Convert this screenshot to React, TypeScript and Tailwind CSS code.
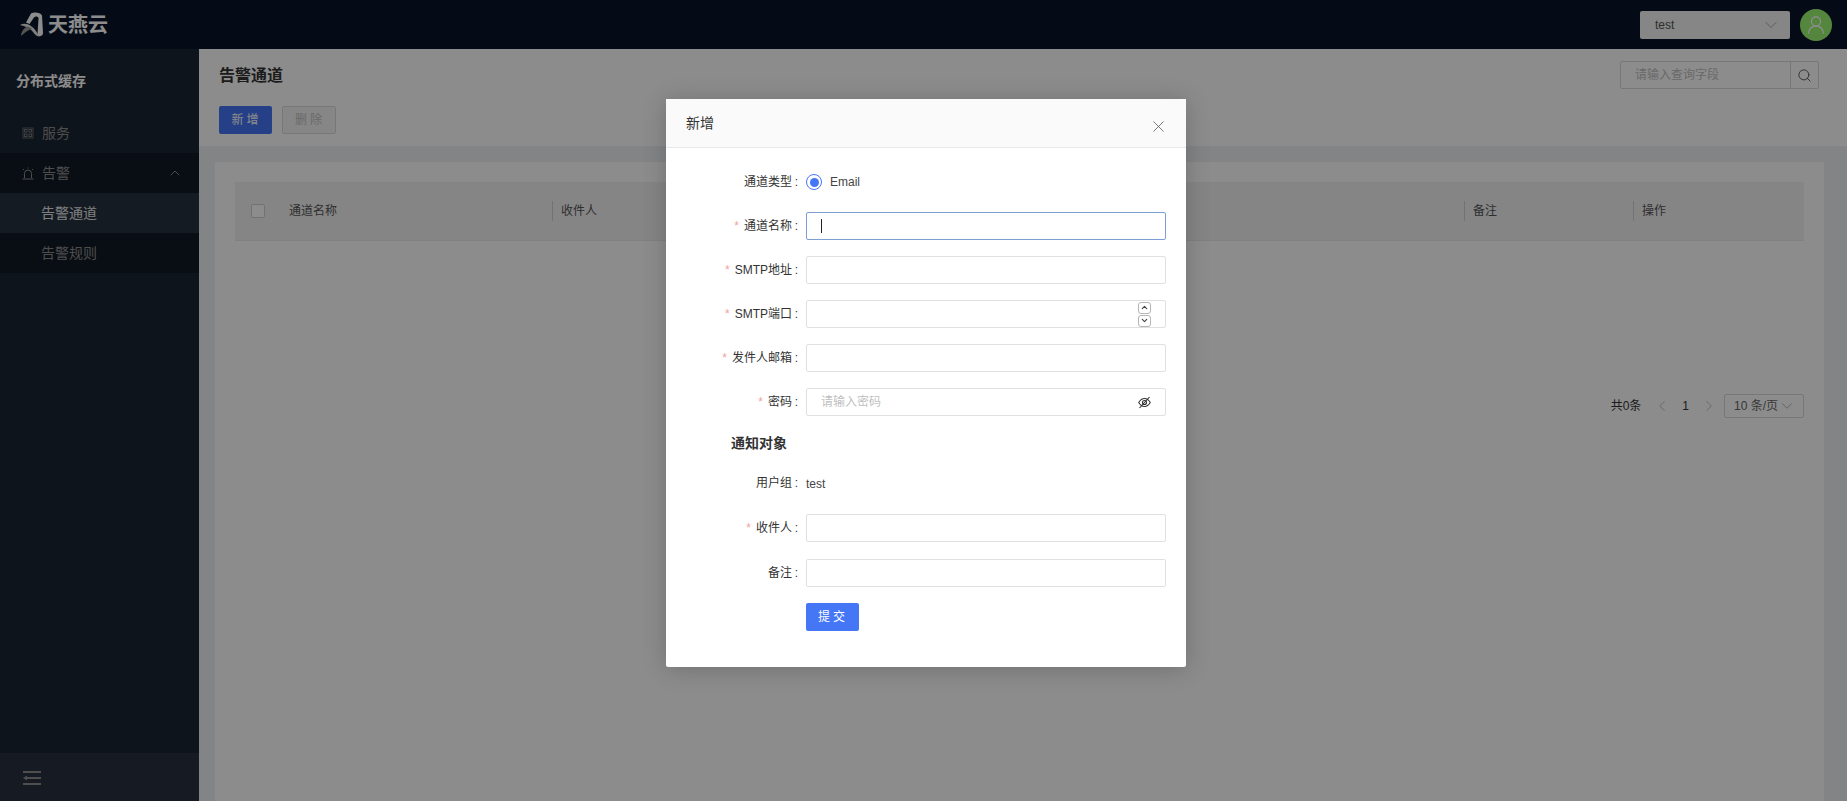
import { ChevronDown, ChevronLeft, ChevronRight, ChevronUp, Search, UserRound, X } from "lucide-react";
import type { ReactNode } from "react";

function Logo() {
  return (
    <svg width="24" height="25" viewBox="0 0 24 25" className="shrink-0">
      <path d="M11 1.500 C14 0 20 0 22 3.500 L23 21 C23 24.500 19 25 17.500 22.500 L18.500 6 C18 4 15 4 14 5.500 L9.500 12 L6 10.500 Z" fill="#ffffff" />
      <path d="M0 13 C5 10 12 12 18 22 C19 24 20 24.500 21 24.500 C17 25 15 23 13 20 C10 16 5 14 0 13 Z" fill="#e5e5e5" />
      <path d="M1 24 C1.500 19 4 16 7.500 14.500 C9.500 15 11 16 12 17 C8 17.500 5 21 1 24 Z" fill="#9a9a9a" />
    </svg>
  );
}

function ServiceIcon() {
  return (
    <svg width="12" height="12" viewBox="0 0 12 12" fill="none" stroke="currentColor" className="shrink-0 opacity-80">
      <rect x="1" y="1" width="10" height="10" strokeWidth="0.800" />
      <rect x="2.500" y="2.500" width="2.500" height="2.500" />
      <rect x="7" y="2.500" width="2.500" height="2.500" />
      <rect x="2.500" y="7" width="2.500" height="2.500" />
      <rect x="7" y="7" width="2.500" height="2.500" />
    </svg>
  );
}

function AlarmIcon() {
  return (
    <svg width="12" height="13" viewBox="0 0 12 13" fill="none" stroke="currentColor" className="shrink-0">
      <path d="M2.500 11 V6.500 a3.500 3.500 0 0 1 7 0 V11" />
      <path d="M0.500 12 H11.500" />
      <path d="M6 0.500 V1.500 M1 2 L2 3 M11 2 L10 3" />
    </svg>
  );
}

function CollapseIcon() {
  return (
    <svg width="19" height="14" viewBox="0 0 19 14" fill="#8f8f8f" className="shrink-0">
      <rect x="0" y="0" width="18" height="2" />
      <rect x="4" y="6" width="14" height="2" />
      <rect x="0" y="12" width="18" height="2" />
      <path d="M0 7 L4 4.500 V9.500 Z" />
    </svg>
  );
}

function EyeInvisible() {
  return (
    <svg width="13" height="13" viewBox="0 0 13 13" fill="none" stroke="#333333" strokeWidth="1.100">
      <path d="M0.700 6.500 C2.500 3.500 4.500 2.500 6.500 2.500 C8.500 2.500 10.500 3.500 12.300 6.500 C10.500 9.500 8.500 10.500 6.500 10.500 C4.500 10.500 2.500 9.500 0.700 6.500 Z" />
      <circle cx="6.500" cy="6.500" r="2" />
      <path d="M11.500 1 L1.500 12" />
    </svg>
  );
}

function Spinner() {
  return (
    <div className="flex flex-col gap-[1px]">
      <span className="flex h-[12px] w-[13px] items-center justify-center rounded-[3px] border border-[#b5b5b5]">
        <ChevronUp className="h-[9px] w-[9px] text-[#444444]" strokeWidth={3} />
      </span>
      <span className="flex h-[12px] w-[13px] items-center justify-center rounded-[3px] border border-[#b5b5b5]">
        <ChevronDown className="h-[9px] w-[9px] text-[#444444]" strokeWidth={3} />
      </span>
    </div>
  );
}

function Field({ label, required, className, children }: { label: string; required?: boolean; className?: string; children: ReactNode }) {
  return (
    <div className={`flex h-[28px] items-center ${className ?? ""}`}>
      <div className="flex w-[133px] shrink-0 items-center justify-end text-xs text-[#333333]">
        {required && <span className="mr-[5px] text-[#f2a3a3]">*</span>}
        <span>{label}</span>
        <span className="ml-[2px] w-[5px] text-center">:</span>
      </div>
      <div className="ml-[7px] w-[360px]">{children}</div>
    </div>
  );
}

function Box({ focused, children }: { focused?: boolean; children?: ReactNode }) {
  return (
    <div
      className={`flex h-[28px] items-center justify-between rounded-[2px] border bg-white pl-[14px] pr-[14px] text-xs ${
        focused ? "border-[#7d9fd3]" : "border-[#e0e0e0]"
      }`}
    >
      {children}
    </div>
  );
}

function HeadCell({ label, className }: { label: string; className: string }) {
  return (
    <div className={`flex h-[20px] items-center border-l border-[#d0d0d0] pl-[8px] ${className}`}>{label}</div>
  );
}

export default function App() {
  return (
    <div className="relative flex h-[801px] w-full flex-col overflow-hidden bg-[#eef0f3] font-['Liberation_Sans','Noto_Sans_CJK_SC',sans-serif]">
      <header className="flex h-[49px] shrink-0 items-center justify-between bg-[#0a1529] pl-[20px] pr-[15px]">
        <div className="flex items-center gap-[4px]">
          <Logo />
          <span className="text-[20px] font-bold leading-none text-white">天燕云</span>
        </div>
        <div className="flex items-center gap-[10px]">
          <div className="flex h-[28px] w-[150px] items-center justify-between rounded-[2px] bg-[#f4f4f4] pl-[15px] pr-[9px] text-xs text-[#555555]">
            test
            <ChevronDown className="h-[20px] w-[20px] text-[#999999]" strokeWidth={1} />
          </div>
          <div className="flex h-[32px] w-[32px] items-center justify-center rounded-full bg-[#9cf56f]">
            <UserRound className="h-[22px] w-[22px] text-white" strokeWidth={1.4} />
          </div>
        </div>
      </header>

      <div className="flex min-h-0 flex-1">
        <aside className="flex w-[199px] shrink-0 flex-col bg-[#1b2532] text-[#8c8c8c]">
          <div className="flex h-[64px] items-center pl-[16px] text-sm font-bold text-white">分布式缓存</div>
          <div className="flex h-[40px] items-center gap-[8px] pl-[22px] text-sm">
            <ServiceIcon />
            服务
          </div>
          <div className="bg-[#121a26]">
            <div className="flex h-[40px] items-center gap-[8px] pl-[22px] pr-[16px] text-sm">
              <AlarmIcon />
              <span className="flex-1">告警</span>
              <ChevronUp className="h-[16px] w-[16px]" strokeWidth={1.5} />
            </div>
            <div className="flex h-[40px] items-center bg-[#263240] pl-[41px] text-sm text-[#e8e8e8]">告警通道</div>
            <div className="flex h-[40px] items-center pl-[41px] text-sm">告警规则</div>
          </div>
          <div className="mt-auto flex h-[48px] items-center bg-[#283140] pl-[23px] pt-[2px]">
            <CollapseIcon />
          </div>
        </aside>

        <main className="flex min-w-0 flex-1 flex-col">
          <div className="bg-white pb-[12px] pl-[20px] pr-[28px] pt-[12px]">
            <div className="flex h-[28px] items-center justify-between">
              <h1 className="pt-[1px] text-base font-bold text-[#333333]">告警通道</h1>
              <div className="flex h-[28px] w-[199px] items-stretch rounded-[2px] border border-[#d9d9d9] text-xs text-[#bfbfbf]">
                <span className="flex flex-1 items-center border-r border-[#d9d9d9] pl-[14px]">请输入查询字段</span>
                <span className="flex w-[27px] items-center justify-center">
                  <Search className="h-[15px] w-[15px] text-[#555555]" strokeWidth={1.5} />
                </span>
              </div>
            </div>
            <div className="mt-[17px] flex gap-[10px] text-xs">
              <button className="h-[28px] w-[53px] rounded-[2px] bg-[#4576f6] pl-[2px] tracking-[3px] text-white">新增</button>
              <button className="h-[28px] w-[54px] rounded-[2px] border border-[#d9d9d9] bg-[#f5f5f5] pl-[2px] tracking-[3px] text-[#bfbfbf]">删除</button>
            </div>
          </div>

          <div className="min-h-0 flex-1 pb-0 pl-[16px] pr-[23px] pt-[16px]">
            <div className="h-full bg-white px-[20px] pt-[20px]">
              <div className="flex h-[59px] items-center border-b border-[#ebebeb] bg-[#f2f2f2] text-xs text-[#555555]">
                <div className="w-[48px] shrink-0 pl-[16px]">
                  <span className="block h-[14px] w-[14px] rounded-[2px] border border-[#d0d0d0] bg-white" />
                </div>
                <div className="w-[269px] shrink-0 pl-[6px]">通道名称</div>
                <HeadCell label="收件人" className="flex-1" />
                <HeadCell label="备注" className="w-[169px] shrink-0" />
                <HeadCell label="操作" className="w-[171px] shrink-0" />
              </div>
              <div className="mt-[153px] flex h-[24px] items-center justify-end text-xs text-[#333333]">
                <span>共0条</span>
                <ChevronLeft className="ml-[12px] h-[18px] w-[18px] text-[#aaaaaa]" strokeWidth={1} />
                <span className="mx-[11px]">1</span>
                <ChevronRight className="mr-[6px] h-[18px] w-[18px] text-[#aaaaaa]" strokeWidth={1} />
                <div className="flex h-[24px] w-[80px] items-center rounded-[2px] border border-[#d9d9d9] pl-[9px] text-[#666666]">
                  10 条/页
                  <ChevronDown className="h-[18px] w-[18px] text-[#999999]" strokeWidth={1} />
                </div>
              </div>
            </div>
          </div>
        </main>
      </div>

      <div className="absolute inset-0 bg-black/45" />

      <div className="absolute left-[666px] top-[99px] h-[568px] w-[520px] rounded-[2px] bg-white shadow-[0_2px_24px_rgba(0,0,0,0.2)]">
        <div className="flex h-[49px] items-center justify-between border-b border-[#e8e8e8] bg-[#fafafa] pl-[20px] pr-[18px]">
          <span className="text-sm text-[#333333]">新增</span>
          <X className="mt-[7px] h-[19px] w-[19px] text-[#555555]" strokeWidth={1} />
        </div>

        <div className="pt-[20px]">
          <Field label="通道类型" className="mb-[16px]">
            <div className="flex items-center gap-[8px] text-xs text-[#444444]">
              <span className="flex h-[16px] w-[16px] items-center justify-center rounded-full border border-[#4576f6]">
                <span className="block h-[9px] w-[9px] rounded-full bg-[#4576f6]" />
              </span>
              Email
            </div>
          </Field>
          <Field label="通道名称" required className="mb-[16px]">
            <Box focused>
              <span className="h-[14px] w-px bg-[#222222]" />
            </Box>
          </Field>
          <Field label="SMTP地址" required className="mb-[16px]">
            <Box />
          </Field>
          <Field label="SMTP端口" required className="mb-[16px]">
            <Box>
              <span />
              <Spinner />
            </Box>
          </Field>
          <Field label="发件人邮箱" required className="mb-[16px]">
            <Box />
          </Field>
          <Field label="密码" required className="mb-[16px]">
            <Box>
              <span className="text-[#bfbfbf]">请输入密码</span>
              <EyeInvisible />
            </Box>
          </Field>

          <div className="mb-[15px] flex h-[22px] items-center pl-[65px] text-sm font-bold text-[#333333]">通知对象</div>

          <Field label="用户组" className="mb-[17px]">
            <span className="text-xs text-[#444444]">test</span>
          </Field>
          <Field label="收件人" required className="mb-[17px]">
            <Box />
          </Field>
          <Field label="备注" className="mb-[16px]">
            <Box />
          </Field>
          <div className="pl-[140px]">
            <button className="h-[28px] w-[53px] rounded-[2px] bg-[#4576f6] pl-[1px] text-xs tracking-[3px] text-white">提交</button>
          </div>
        </div>
      </div>
    </div>
  );
}
